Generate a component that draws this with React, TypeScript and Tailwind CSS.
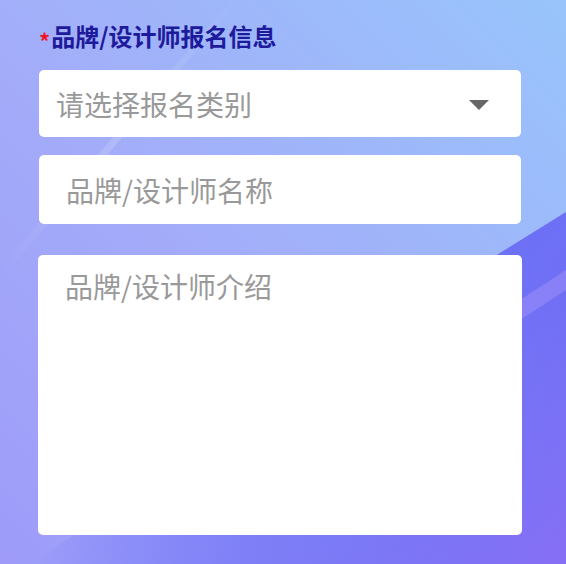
import React from "react";

const FONT = '"Noto Sans CJK SC", "Noto Sans", sans-serif';

function Background() {
  return (
    <svg
      className="absolute inset-0 pointer-events-none"
      width="566"
      height="564"
      viewBox="0 0 566 564"
    >
      <defs>
        <linearGradient id="base" x1="0" y1="1" x2="1" y2="0">
          <stop offset="0" stopColor="#9e9bf9" />
          <stop offset="0.45" stopColor="#a3acf9" />
          <stop offset="1" stopColor="#98c4fb" />
        </linearGradient>
        <linearGradient
          id="dark"
          gradientUnits="userSpaceOnUse"
          x1="40"
          y1="564"
          x2="566"
          y2="300"
        >
          <stop offset="0" stopColor="#9c9cf9" />
          <stop offset="0.3" stopColor="#8589f8" />
          <stop offset="0.6" stopColor="#7680f6" />
          <stop offset="1" stopColor="#6a70f5" />
        </linearGradient>
        <linearGradient
          id="dark2"
          gradientUnits="userSpaceOnUse"
          x1="300"
          y1="300"
          x2="566"
          y2="564"
        >
          <stop offset="0" stopColor="#6a70f5" stopOpacity="0" />
          <stop offset="1" stopColor="#8a6ef5" stopOpacity="0.9" />
        </linearGradient>
        <linearGradient id="streak" x1="0" y1="0" x2="1" y2="0">
          <stop offset="0" stopColor="#ffffff" stopOpacity="0" />
          <stop offset="0.5" stopColor="#ffffff" stopOpacity="0.16" />
          <stop offset="1" stopColor="#ffffff" stopOpacity="0" />
        </linearGradient>
      </defs>
      <rect width="566" height="564" fill="url(#base)" />
      <polygon points="566,212 500,253 30,564 566,564" fill="url(#dark)" />
      <polygon points="566,212 500,253 30,564 566,564" fill="url(#dark2)" />
      <polygon points="520,300 566,270 566,290 520,320" fill="#9d8ef7" opacity="0.55" />
      <polygon points="232,0 240,0 0,280 0,268" fill="url(#streak)" />
    </svg>
  );
}

export default function App() {
  return (
    <div
      className="relative w-[566px] h-[564px] overflow-hidden"
      style={{ fontFamily: FONT }}
    >
      <Background />
      <div className="relative flex flex-col pl-[39px] pr-[45px] pt-[24px]">
        <div className="flex items-center h-[24px]">
          <span className="text-[22px] leading-none font-bold text-[#f01828] mr-[1px] mt-[8px]">
            *
          </span>
          <span className="text-[24px] leading-[24px] font-bold text-[#1d1a9c]">
            品牌/设计师报名信息
          </span>
        </div>

        <div className="mt-[22px] h-[67px] bg-white rounded-[5px] flex items-center pl-[17px] pr-[32px]">
          <span className="flex-1 text-[28px] leading-none text-[#999999]">
            请选择报名类别
          </span>
          <svg width="20" height="10" viewBox="0 0 20 10" className="mt-[2px]">
            <polygon points="0,0 20,0 10,10" fill="#666666" />
          </svg>
        </div>

        <div className="mt-[18px] h-[69px] bg-white rounded-[5px] flex items-center pl-[27px]">
          <span className="text-[28px] leading-none text-[#999999]">
            品牌/设计师名称
          </span>
        </div>

        <div className="mt-[31px] -mx-[1px] h-[280px] bg-white rounded-[5px] pl-[27px] pt-[14px]">
          <span className="text-[28px] leading-[34px] text-[#999999]">
            品牌/设计师介绍
          </span>
        </div>
      </div>
    </div>
  );
}
